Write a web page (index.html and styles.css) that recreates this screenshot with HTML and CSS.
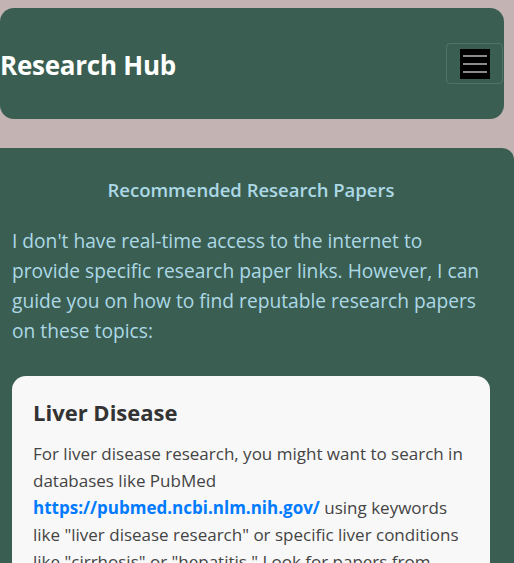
FILE: index.html
```html
<!DOCTYPE html>
<html lang="en">
<head>
<meta charset="utf-8">
<title>Research Hub</title>
<link rel="stylesheet" href="styles.css">
</head>
<body>
<header class="site-header">
  <h1 class="brand">Research Hub</h1>
  <button class="menu-toggle" aria-label="Menu">
    <span class="menu-icon"><span></span><span></span><span></span></span>
  </button>
</header>
<main class="papers">
  <h2 class="papers-title">Recommended Research Papers</h2>
  <p class="intro">I don't have real-time access to the internet to provide specific research paper links. However, I can guide you on how to find reputable research papers on these topics:</p>
  <section class="card">
    <h3 class="card-title">Liver Disease</h3>
    <p class="card-text">For liver disease research, you might want to search in databases like PubMed <a href="#">https://pubmed.ncbi.nlm.nih.gov/</a> using keywords like "liver disease research" or specific liver conditions like "cirrhosis" or "hepatitis." Look for papers from reputable journals and academic institutions.</p>
  </section>
</main>
</body>
</html>
```
FILE: styles.css
```css
html, body {
  margin: 0;
  padding: 0;
}
body {
  background: #c3b3b3;
  font-family: "Open Sans", "Noto Sans", sans-serif;
  overflow-x: hidden;
  padding-top: 8px;
}
.site-header {
  width: 504px;
  height: 111px;
  box-sizing: border-box;
  background: #3a5f52;
  border-radius: 14px;
  display: flex;
  align-items: center;
  justify-content: space-between;
}
.brand {
  margin: 2px 0 0;
  color: #fff;
  font-size: 26px;
  font-weight: 700;
  letter-spacing: -0.25px;
}
.menu-toggle {
  width: 57px;
  height: 41px;
  margin-right: 1px;
  background: transparent;
  border: 1px solid rgba(255,255,255,0.12);
  border-radius: 4px;
  display: flex;
  align-items: center;
  justify-content: center;
  padding: 0;
}
.menu-icon {
  width: 30px;
  height: 30px;
  background: #000;
  display: flex;
  flex-direction: column;
  justify-content: center;
  align-items: center;
  gap: 6px;
}
.menu-icon span {
  display: block;
  width: 24px;
  height: 2px;
  background: #8a8a8a;
}
.papers {
  margin: 29px 0 0 -12px;
  width: 526px;
  box-sizing: border-box;
  padding: 30px 24px 0;
  background: #3a5f52;
  border-radius: 12px;
  min-height: 440px;
}
.papers-title {
  margin: 0 0 24px;
  text-align: center;
  color: #add8e6;
  font-size: 18.5px;
  font-weight: 600;
  line-height: 24px;
}
.intro {
  margin: 0 0 30px;
  color: #add8e6;
  font-size: 19.2px;
  line-height: 30px;
}
.card {
  background: #f8f8f8;
  border-radius: 14px;
  padding: 20px 21px 20px;
}
.card-title {
  margin: 0 0 12px;
  color: #333;
  font-size: 22px;
  font-weight: 700;
  line-height: 32px;
}
.card-text {
  margin: 0;
  color: #444;
  font-size: 17px;
  line-height: 27px;
}
.card-text a {
  color: #007bff;
  font-weight: 700;
  text-decoration: none;
}
```
